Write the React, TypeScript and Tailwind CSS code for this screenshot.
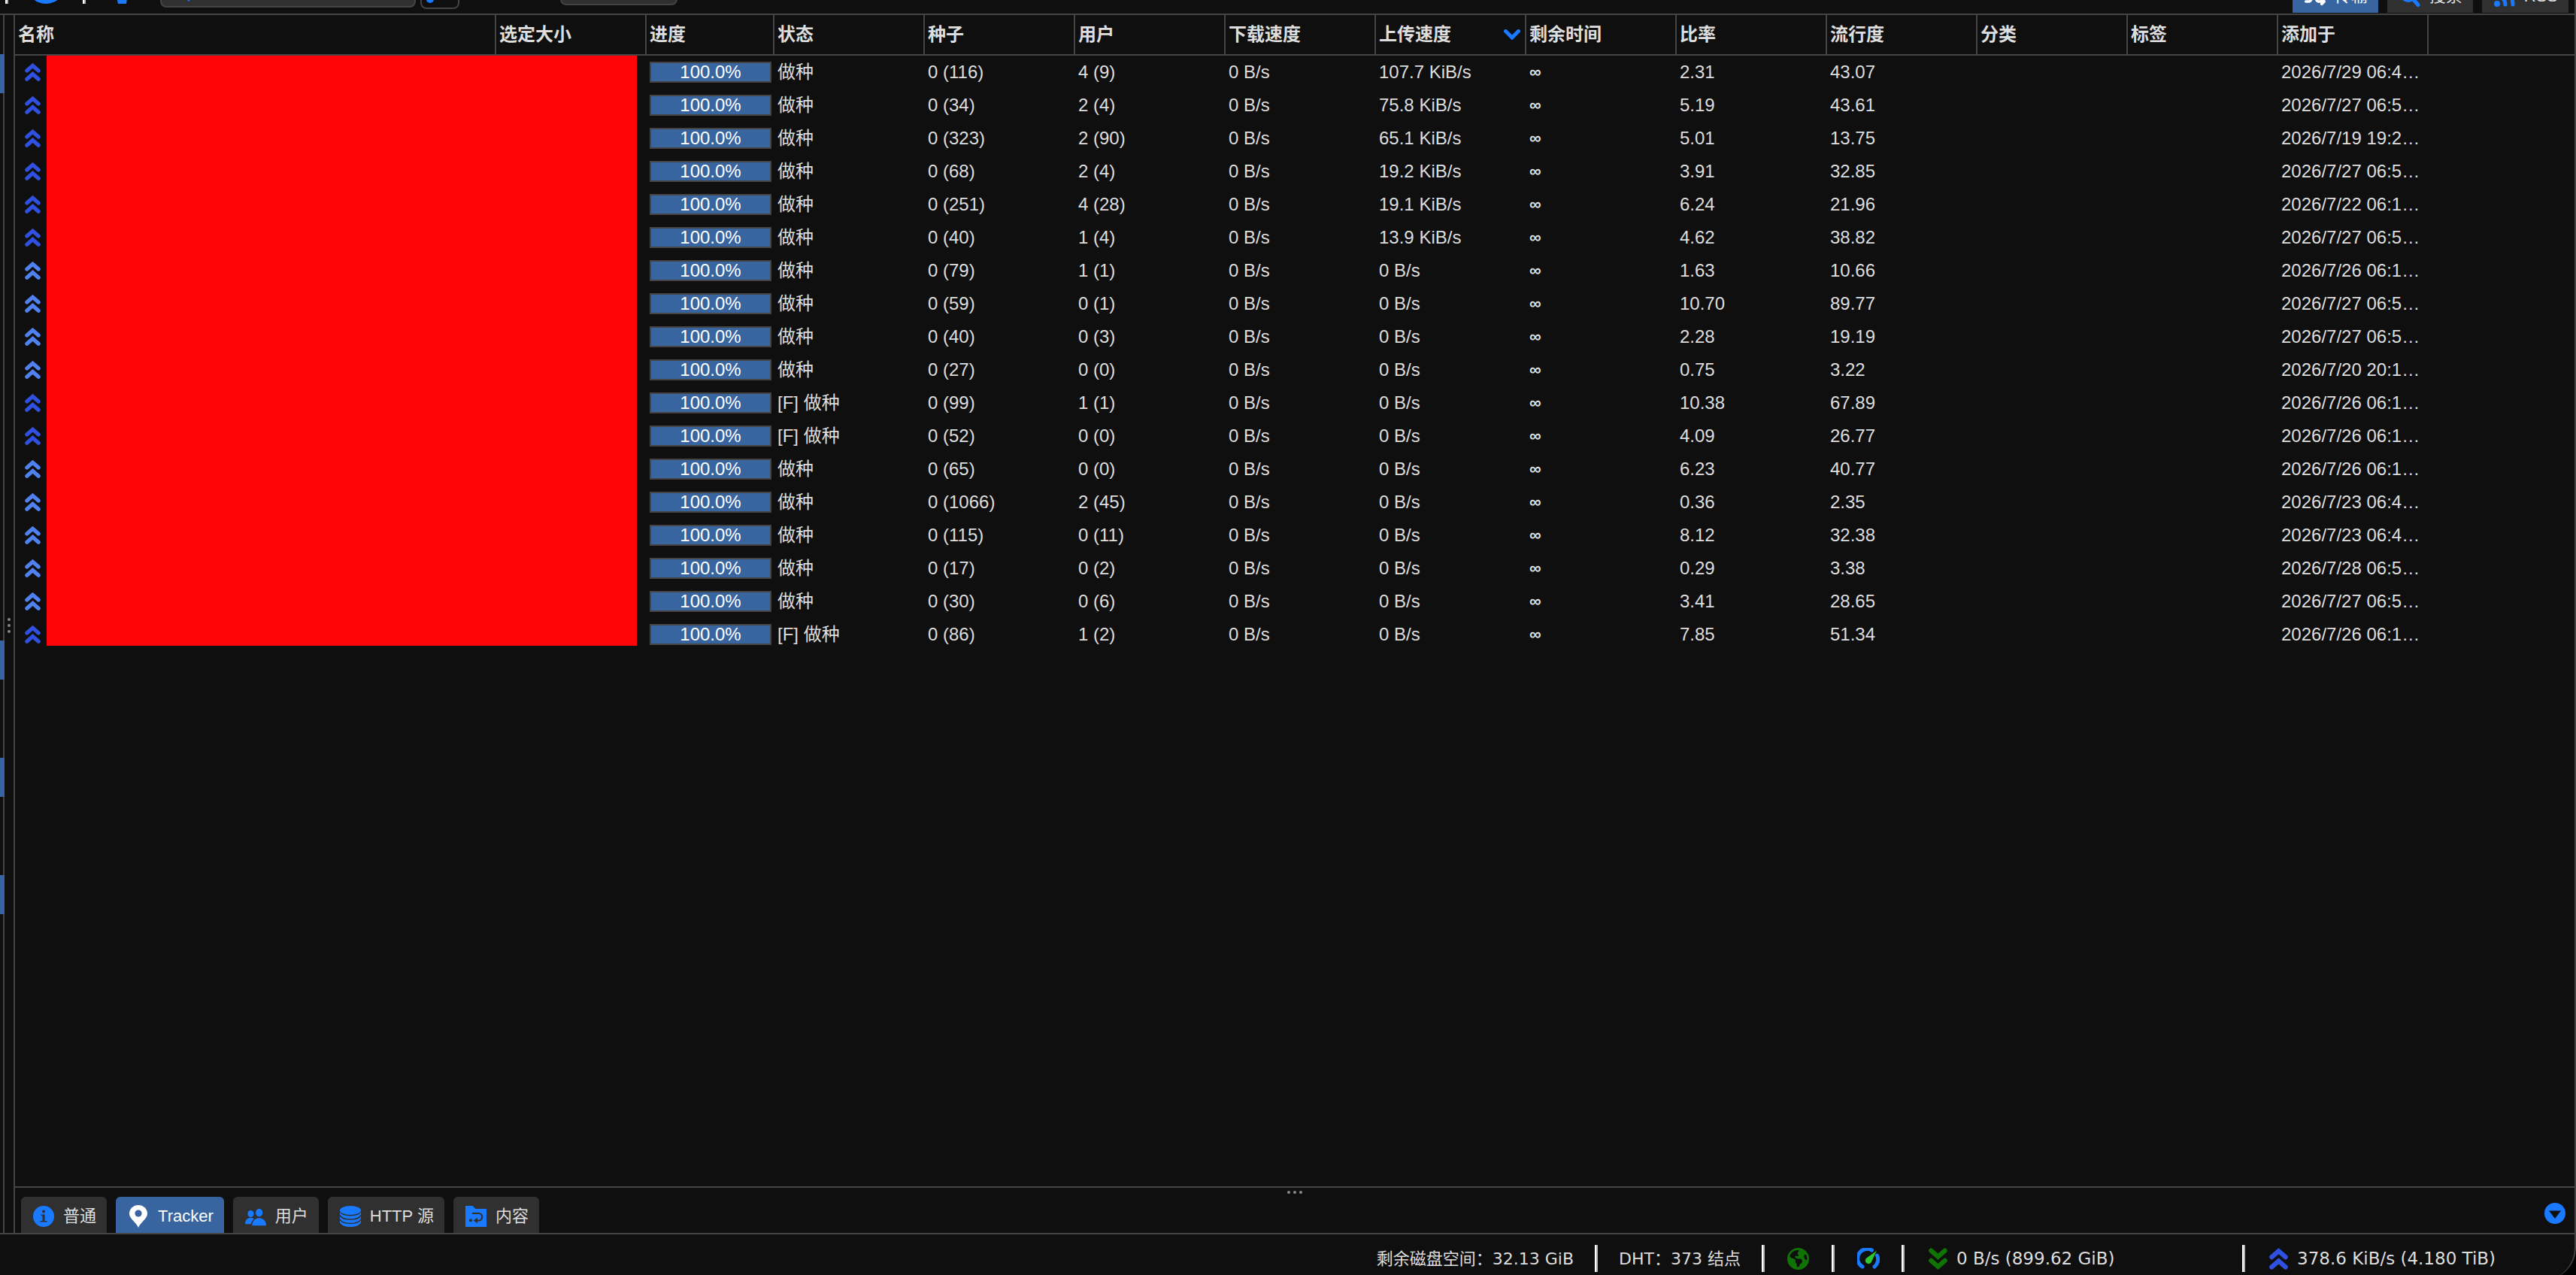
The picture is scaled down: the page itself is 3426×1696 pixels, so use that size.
import React from "react";
import { FaEarthAmericas, FaShuffle } from "react-icons/fa6";

type Row = {
  icon: "up" | "stalled";
  status: string;
  seeds: string;
  peers: string;
  up: string;
  ratio: string;
  popularity: string;
  added: string;
};

const row = (
  icon: Row["icon"],
  status: string,
  seeds: string,
  peers: string,
  up: string,
  ratio: string,
  popularity: string,
  added: string,
): Row => ({ icon, status, seeds, peers, up, ratio, popularity, added });

const rows: Row[] = [
  row("up", "做种", "0 (116)", "4 (9)", "107.7 KiB/s", "2.31", "43.07", "2026/7/29 06:4…"),
  row("up", "做种", "0 (34)", "2 (4)", "75.8 KiB/s", "5.19", "43.61", "2026/7/27 06:5…"),
  row("up", "做种", "0 (323)", "2 (90)", "65.1 KiB/s", "5.01", "13.75", "2026/7/19 19:2…"),
  row("up", "做种", "0 (68)", "2 (4)", "19.2 KiB/s", "3.91", "32.85", "2026/7/27 06:5…"),
  row("up", "做种", "0 (251)", "4 (28)", "19.1 KiB/s", "6.24", "21.96", "2026/7/22 06:1…"),
  row("up", "做种", "0 (40)", "1 (4)", "13.9 KiB/s", "4.62", "38.82", "2026/7/27 06:5…"),
  row("stalled", "做种", "0 (79)", "1 (1)", "0 B/s", "1.63", "10.66", "2026/7/26 06:1…"),
  row("stalled", "做种", "0 (59)", "0 (1)", "0 B/s", "10.70", "89.77", "2026/7/27 06:5…"),
  row("stalled", "做种", "0 (40)", "0 (3)", "0 B/s", "2.28", "19.19", "2026/7/27 06:5…"),
  row("stalled", "做种", "0 (27)", "0 (0)", "0 B/s", "0.75", "3.22", "2026/7/20 20:1…"),
  row("up", "[F] 做种", "0 (99)", "1 (1)", "0 B/s", "10.38", "67.89", "2026/7/26 06:1…"),
  row("up", "[F] 做种", "0 (52)", "0 (0)", "0 B/s", "4.09", "26.77", "2026/7/26 06:1…"),
  row("stalled", "做种", "0 (65)", "0 (0)", "0 B/s", "6.23", "40.77", "2026/7/26 06:1…"),
  row("stalled", "做种", "0 (1066)", "2 (45)", "0 B/s", "0.36", "2.35", "2026/7/23 06:4…"),
  row("stalled", "做种", "0 (115)", "0 (11)", "0 B/s", "8.12", "32.38", "2026/7/23 06:4…"),
  row("stalled", "做种", "0 (17)", "0 (2)", "0 B/s", "0.29", "3.38", "2026/7/28 06:5…"),
  row("stalled", "做种", "0 (30)", "0 (6)", "0 B/s", "3.41", "28.65", "2026/7/27 06:5…"),
  row("up", "[F] 做种", "0 (86)", "1 (2)", "0 B/s", "7.85", "51.34", "2026/7/26 06:1…"),
];

const columns = [
  "名称", "选定大小", "进度", "状态", "种子", "用户", "下载速度", "上传速度",
  "剩余时间", "比率", "流行度", "分类", "标签", "添加于",
];

function Chevrons({ className, down }: { className: string; down?: boolean }) {
  return (
    <svg viewBox="0 0 21 24" className={className} fill="none" stroke="currentColor" strokeWidth="5.200" strokeLinecap="round" aria-hidden="true">
      {down ? (
        <path d="M2.800 2.800 10.500 9.500 18.200 2.800M2.800 14 10.500 20.700 18.200 14" />
      ) : (
        <path d="M2.800 10 10.500 3.300 18.200 10M2.800 21.200 10.500 14.500 18.200 21.200" />
      )}
    </svg>
  );
}

const svgClass = "block h-7 w-7 shrink-0";

const InfoIcon = () => (
  <svg viewBox="0 0 28 28" className={svgClass} aria-hidden="true">
    <circle cx="14" cy="14" r="14" fill="#1a7aff" />
    <circle cx="14" cy="7.5" r="2" fill="#303030" />
    <path d="M10.5 11.5H15.5V20H18.5V21.5H9.5V20H12.5V13H10.5z" fill="#303030" />
  </svg>
);

const PinIcon = () => (
  <svg viewBox="0 0 28 30" className="block h-[30px] w-7 shrink-0" aria-hidden="true">
    <path d="M14 30C11.5 23.5 2 18 2 11.5a12 11.5 0 1 1 24 0C26 18 16.500 23.500 14 30z" fill="#fff" />
    <circle cx="14" cy="11" r="4.600" fill="#3865a0" />
  </svg>
);

const UsersIcon = () => (
  <svg viewBox="0 0 30 25" className="block h-[25px] w-7 shrink-0" fill="#1a7aff" aria-hidden="true">
    <ellipse cx="8" cy="8.3" rx="4.300" ry="4.900" />
    <ellipse cx="20" cy="6.700" rx="5" ry="5.600" />
    <path d="M10 25c0-6 4-10.500 10-10.500S30 19 30 25z" />
    <path d="M0 23c0-5.500 3-8.800 8-8.800 2 0 3.500.5 4.500 1.400C10 17.500 8.800 20 8.400 23z" />
  </svg>
);

const DatabaseIcon = () => (
  <svg viewBox="0 0 28 28" className={svgClass} fill="#1a7aff" aria-hidden="true">
    <ellipse cx="14" cy="6" rx="14" ry="6" />
    {[0, 5.4, 10.8].map((y) => (
      <path key={y} transform={`translate(0 ${y})`} d="M0 8.500Q3 13.400 14 13.400T28 8.500V11.500Q25 17.300 14 17.300T0 11.500z" />
    ))}
  </svg>
);

const FolderIcon = () => (
  <svg viewBox="0 0 28 28" className={svgClass} aria-hidden="true">
    <path d="M0 0H9.500L13.500 4H28V28H0z" fill="#1a7aff" />
    <path d="M9 10H17.500a4.700 4.700 0 0 1 0 9.500H15" fill="none" stroke="#303030" strokeWidth="2.200" />
    <path d="M10.500 19.500 16 15.800V23.200z" fill="#303030" />
    <circle cx="7" cy="19.300" r="2.100" fill="#303030" />
  </svg>
);

const SearchIcon = () => (
  <svg viewBox="0 0 28 28" className={svgClass} fill="none" stroke="#1a7aff" aria-hidden="true">
    <circle cx="12" cy="11" r="8.500" strokeWidth="5" />
    <path d="M18.500 18 25 25.500" strokeWidth="5" strokeLinecap="round" />
  </svg>
);

const RssIcon = () => (
  <svg viewBox="0 0 28 28" className={svgClass} fill="none" stroke="#1a7aff" strokeWidth="5" strokeLinecap="round" aria-hidden="true">
    <circle cx="4" cy="24" r="4" fill="#1a7aff" stroke="none" />
    <path d="M3 13A12 12 0 0 1 15 25M3 3A22 22 0 0 1 25 25" />
  </svg>
);

const GaugeIcon = () => (
  <svg viewBox="0 0 30 28" className="block h-7 w-[30px] shrink-0" aria-hidden="true">
    <path d="M7 25A12.600 12.600 0 0 1 19.500 3M26.500 10A12.600 12.600 0 0 1 23 25" fill="none" stroke="#1a7aff" strokeWidth="5" strokeLinecap="round" />
    <path d="M26.500 3 19 19A4.500 4.500 0 1 1 12 13.500z" fill="#2fc72f" stroke="#0f0f0f" strokeWidth="0.500" />
  </svg>
);

const Sep = () => <span className="h-9 w-1 shrink-0 border-r-2 border-l-2 border-l-white border-r-[#b4b4b4]" />;

function Tab({ icon, label, active }: { icon: React.ReactNode; label: string; active?: boolean }) {
  return (
    <button
      type="button"
      className={`flex h-12 shrink-0 items-center gap-3 rounded-t-md pt-1 pr-3.5 pl-4 text-[22px] leading-7 whitespace-nowrap ${
        active ? "bg-[#3865a0] text-white" : "bg-[#303030] text-[#dedede]"
      }`}
    >
      {icon}
      {label}
    </button>
  );
}

const Dot = () => <span className="h-1 w-1 rounded-full bg-[#888]" />;

function Toolbar() {
  return (
    <header className="flex h-5 shrink-0 items-end overflow-hidden border-b-2 border-[#444] pr-2">
      <div className="flex shrink-0 items-end pb-[13px] pl-[7px]">
        <Sep />
        <button type="button" aria-label="添加" className="ml-6 h-[52px] w-[52px] rounded-full bg-[#1a7aff]" />
        <span className="ml-[23px] flex">
          <Sep />
        </span>
        <button type="button" aria-label="删除" className="ml-10">
          <svg viewBox="0 0 16 24" className="block h-6 w-4" fill="#1a7aff" aria-hidden="true">
            <path d="M0 10H16L14 24H3z" />
          </svg>
        </button>
      </div>
      <label className="mb-2 ml-[43px] flex h-10 w-[340px] shrink-0 items-end rounded-lg border-2 border-[#444] bg-[#303030] pl-8">
        <svg viewBox="0 0 8 16" className="mb-1.5 block h-4 w-2 shrink-0" fill="#1a7aff" aria-hidden="true">
          <path d="M0 0H8V12L4 16L0 12z" />
        </svg>
        <input aria-label="筛选" className="h-9 min-w-0 flex-1 bg-transparent outline-none" />
      </label>
      <button type="button" aria-label="筛选选项" className="mb-1.5 ml-1.5 flex h-10 w-[52px] shrink-0 items-end rounded-lg border-2 border-[#444] pb-1.5 pl-1.5">
        <span className="h-5 w-2.5 rounded-full bg-[#1a7aff]" />
      </button>
      <select aria-label="筛选字段" className="mb-[11px] ml-[134px] h-10 w-[156px] shrink-0 appearance-none rounded-lg border-2 border-[#444] bg-[#303030]" />
      <nav className="ml-auto flex gap-3 pb-px">
        <Tab icon={<FaShuffle className="h-7 w-7" />} label="传输" active />
        <Tab icon={<SearchIcon />} label="搜索" />
        <Tab icon={<RssIcon />} label="RSS" />
      </nav>
    </header>
  );
}

function TorrentTable() {
  return (
    <div className="relative flex-1">
      <table className="w-full table-fixed border-separate border-spacing-0 text-left text-2xl">
        <colgroup>
          <col className="w-[640px]" />
          <col className="w-[200px]" />
          <col className="w-[170px]" />
          {columns.slice(3).map((c) => (
            <col key={c} className="w-[200px]" />
          ))}
          <col />
        </colgroup>
        <thead>
          <tr>
            {columns.map((c) => (
              <th key={c} className="h-[54px] border-r-2 border-b-2 border-[#444] px-1 font-bold">
                <span className="flex items-center justify-between leading-9">
                  {c}
                  {c === "上传速度" && (
                    <svg viewBox="0 0 22 14" className="mr-0.5 block h-3.5 w-[22px]" fill="none" stroke="#1a7aff" strokeWidth="5" strokeLinecap="round" aria-hidden="true">
                      <path d="M2.500 2.500 11 11 19.500 2.500" />
                    </svg>
                  )}
                </span>
              </th>
            ))}
            <th className="border-b-2 border-[#444]" aria-label="空" />
          </tr>
        </thead>
        <tbody className="leading-[44px] whitespace-nowrap">
          {rows.map((r, i) => (
            <tr key={i} className="h-11 [&>td]:h-11 [&>td]:px-1 [&>td]:py-0">
              <td>
                <span className={`flex pl-[9px] ${r.icon === "up" ? "text-[#3050e0]" : "text-[#4f82f0]"}`}>
                  <Chevrons className="block h-6 w-[21px]" />
                </span>
              </td>
              <td />
              <td>
                <div className="h-7 border-2 border-[#444] bg-[#3865a0] text-center leading-6 text-white">100.0%</div>
              </td>
              <td>{r.status}</td>
              <td>{r.seeds}</td>
              <td>{r.peers}</td>
              <td>0 B/s</td>
              <td>{r.up}</td>
              <td className="text-[22px] font-bold">∞</td>
              <td>{r.ratio}</td>
              <td>{r.popularity}</td>
              <td />
              <td />
              <td>{r.added}</td>
              <td />
            </tr>
          ))}
        </tbody>
      </table>
      <div className="absolute top-[54px] left-[42px] h-[785px] w-[785px] bg-[#ff0408]" />
    </div>
  );
}

function StatusBar() {
  return (
    <footer className="flex h-[62px] shrink-0 items-start justify-end border-t-2 border-[#444] pt-3.5 font-['DejaVu_Sans','Noto_Sans_CJK_SC',sans-serif] text-[22px]">
      <div className="flex h-9 items-center whitespace-nowrap">
        <span className="px-7">剩余磁盘空间：32.13 GiB</span>
        <Sep />
        <span className="px-7">DHT：373 结点</span>
        <Sep />
        <span className="flex w-[89px] justify-center">
          <FaEarthAmericas className="h-[29px] w-[29px] text-[#0f7305]" />
        </span>
        <Sep />
        <button type="button" aria-label="备用速度限制" className="flex w-[89px] justify-center">
          <GaugeIcon />
        </button>
        <Sep />
        <button type="button" className="flex w-[449px] items-center gap-3 pl-8 text-[23px]">
          <Chevrons down className="block h-[29px] w-[25px] text-[#0f7305]" />
          0 B/s (899.62 GiB)
        </button>
        <Sep />
        <button type="button" className="flex w-[438px] items-center gap-3 pl-8 text-[23px]">
          <Chevrons className="block h-[29px] w-[25px] text-[#3050e0]" />
          378.6 KiB/s (4.180 TiB)
        </button>
      </div>
    </footer>
  );
}

const selectedFilters = [1, 16, 19, 22];

export default function App() {
  return (
    <div className="h-screen overflow-hidden bg-black">
      <div className="flex h-[calc(100vh+6px)] flex-col overflow-hidden rounded-br-[42px] border-r-2 border-[#444] bg-[#0f0f0f] font-['Liberation_Sans','Noto_Sans_CJK_SC',sans-serif] text-[#dedede]">
        <Toolbar />
        <main className="flex min-h-0 flex-1">
          <aside className="flex w-1.5 shrink-0 flex-col overflow-hidden">
            {Array.from({ length: 32 }, (_, i) => (
              <span
                key={i}
                className={`h-[52px] shrink-0 ${selectedFilters.includes(i) ? "bg-[#3865a0]" : "border-r-2 border-[#444]"}`}
              />
            ))}
          </aside>
          <div className="flex w-3 shrink-0 flex-col items-center justify-center gap-1 pt-1">
            <Dot />
            <Dot />
            <Dot />
          </div>
          <section className="flex min-w-0 flex-1 flex-col border-l-2 border-[#444]">
            <TorrentTable />
            <div className="flex h-3.5 shrink-0 items-start justify-center gap-1 border-t-2 border-[#444] pt-1">
              <Dot />
              <Dot />
              <Dot />
            </div>
            <div className="flex shrink-0 items-start gap-3 pr-3 pl-2">
              <Tab icon={<InfoIcon />} label="普通" />
              <Tab icon={<PinIcon />} label="Tracker" active />
              <Tab icon={<UsersIcon />} label="用户" />
              <Tab icon={<DatabaseIcon />} label="HTTP 源" />
              <Tab icon={<FolderIcon />} label="内容" />
              <button type="button" aria-label="收起" className="mt-2 ml-auto">
                <svg viewBox="0 0 28 28" className={svgClass} aria-hidden="true">
                  <circle cx="14" cy="14" r="14" fill="#1a7aff" />
                  <path d="M6 10.500H22L14 21z" fill="#0f0f0f" />
                </svg>
              </button>
            </div>
          </section>
        </main>
        <StatusBar />
      </div>
    </div>
  );
}
